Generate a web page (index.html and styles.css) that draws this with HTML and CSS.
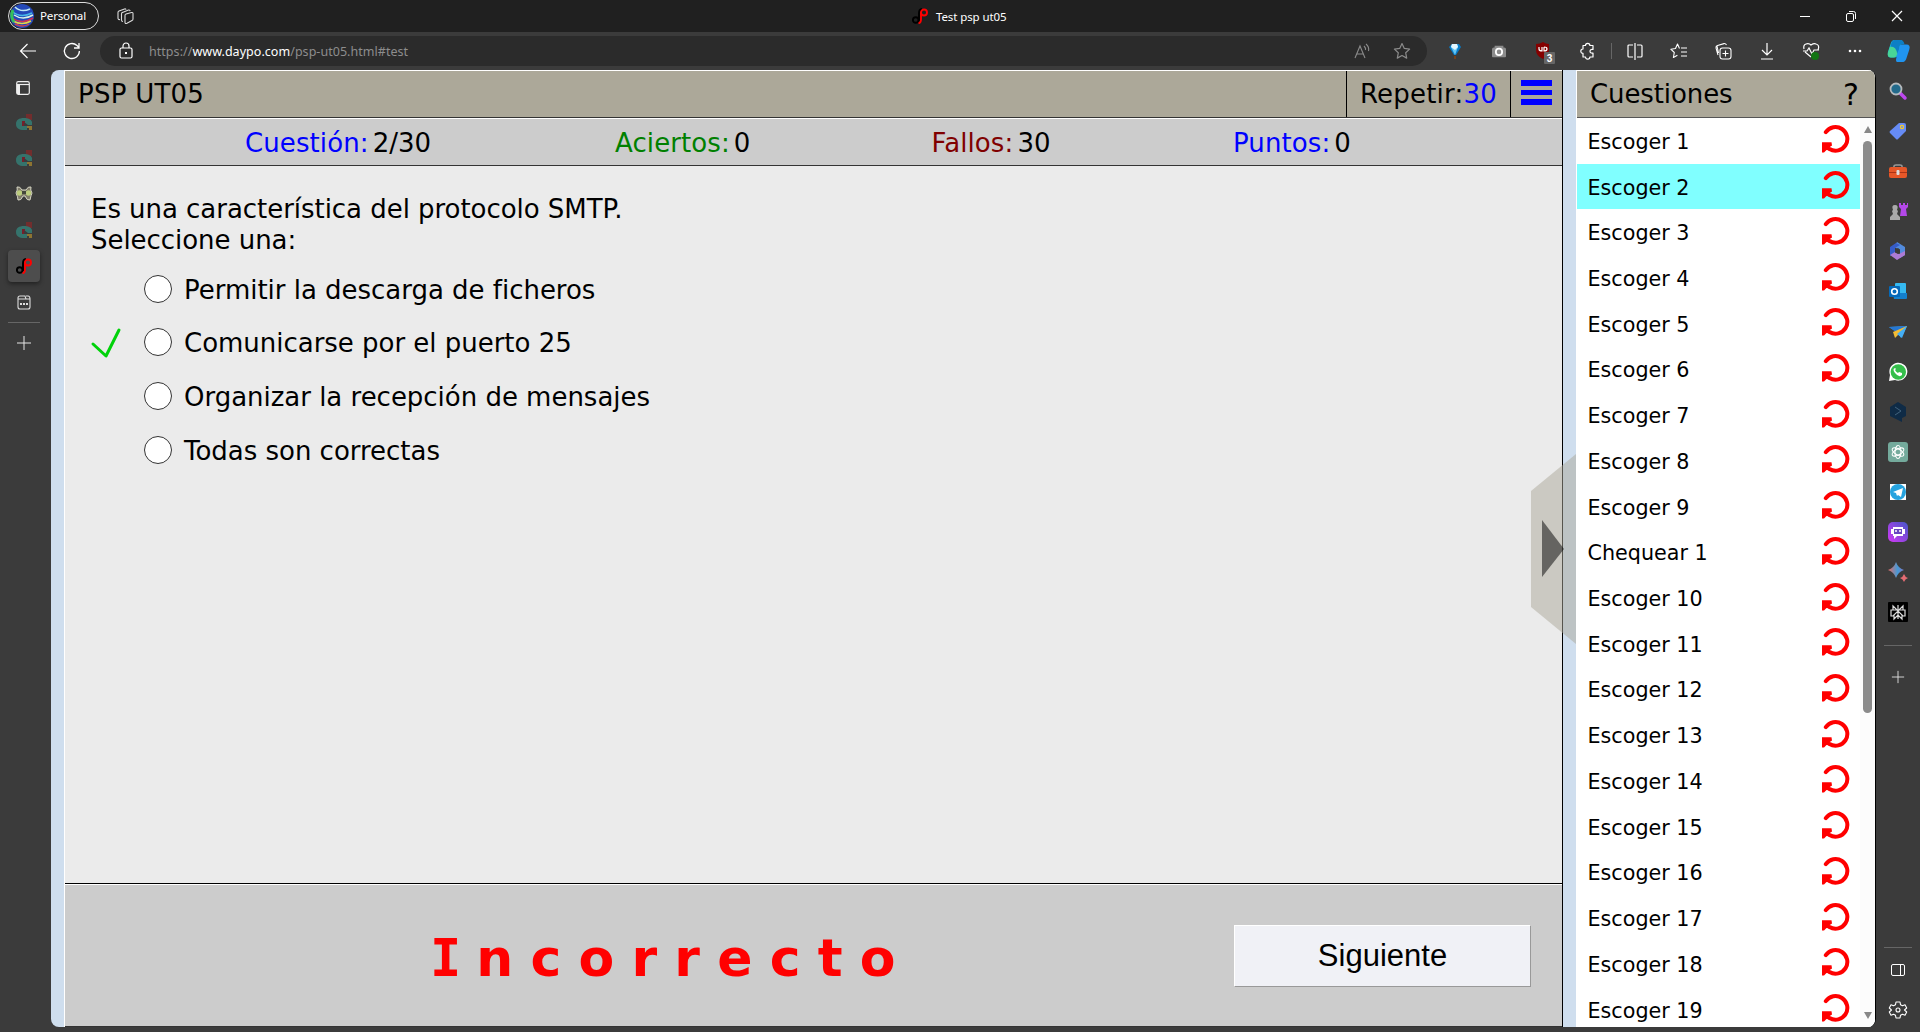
FILE: index.html
```html
<!DOCTYPE html>
<html lang="es">
<head>
<meta charset="utf-8">
<title>Test psp ut05</title>
<link rel="stylesheet" href="styles.css">
</head>
<body>
<svg class="defs" aria-hidden="true">
  <symbol id="redo" viewBox="0 0 28 28"><path d="M3.800 7.200A11.800 11.800 0 1 1 7.500 24" fill="none" stroke="#f00" stroke-width="4" stroke-linecap="round"/><path d="M0 17.300h9.500l.5 3.200-3 2 2 3-4.500-.5L2 27.500H0z" fill="#f00"/></symbol>
  <symbol id="moodle" viewBox="0 0 16 16"><path d="M10 0h6v6h-6z" fill="#722d2d"/><path d="M8 4C3 4 0 6 0 10s3 6 8 6h3v-4H8q-2 0-2-2t2-2l4 3h4V8c-1-3-4-4-8-4z" fill="#35736c"/><path d="M6 7h3v2H8v3H6z" fill="#74202b"/><path d="M11 12h5v4h-3v-2h-2z" fill="#8e7431"/></symbol>
  <symbol id="daypo" viewBox="0 0 16 16"><circle cx="3.700" cy="12" r="2.800" fill="none" stroke="#000" stroke-width="1.900"/><path d="M7 13V5q0-3.500 3-4" fill="none" stroke="#000" stroke-width="1.900"/><circle cx="12" cy="4.500" r="3" fill="none" stroke="#f00" stroke-width="1.900"/><path d="M9 4v7q0 4-2.500 4.300" fill="none" stroke="#f00" stroke-width="1.900"/></symbol>
  <symbol id="plus" viewBox="0 0 16 16"><path d="M8 1v14M1 8h14" stroke="#e6e6e6" fill="none"/></symbol>
</svg>

<header class="titlebar">
  <div class="profile">
    <svg width="24" height="24" viewBox="0 0 24 24"><circle cx="12" cy="12" r="12" fill="#2348b8"/><g fill="none" stroke-width="1.500"><path d="M5 3q6 6 15 2" stroke="#bde8f5"/><path d="M2 7q8 8 20 2" stroke="#47b8e8"/><path d="M4 11q9 6 19 0" stroke="#d8f4e8"/><path d="M2 14q10 7 21 0" stroke="#cf3154"/><path d="M3 17q9 5 18 0" stroke="#e3d547"/><path d="M5 20q8 4 14 0" stroke="#cc3f53"/><path d="M3 6q-3 6 1 12" stroke="#35c05a" stroke-width="3"/></g></svg>
    <span>Personal</span>
  </div>
  <svg class="workspaces" width="17" height="17" viewBox="0 0 17 17" fill="none" stroke="#ddd" stroke-width="1.100"><path d="M9 6 14.500 4.500q1.500-.3 1.500 1V11q0 1.200-1 1.600l-5 2.700q-2 .7-2-1V7.500Q8 6.300 9 6z"/><path d="M6 13.500q-1.500 0-1.500-1.500V6q0-1.300 1-1.600l6-2.400q1.300-.3 1.600 1.200"/><path d="M3 11.500Q1 12 1 10V4.500q0-1 1-1.400L7.500 1q1-.3 1.700.5"/></svg>
  <div class="tab-title"><svg width="16" height="16"><use href="#daypo"/></svg><span>Test psp ut05</span></div>
  <div class="window-buttons">
    <svg width="12" height="12" viewBox="0 0 12 12"><path d="M1 6.500h10" stroke="#fff"/></svg>
    <svg width="12" height="12" viewBox="0 0 12 12" fill="none" stroke="#fff"><rect x="1.500" y="3.500" width="7" height="8" rx="1.500"/><path d="M4 1.500h4.500q2 0 2 2V9"/></svg>
    <svg width="12" height="12" viewBox="0 0 12 12"><path d="m1 1 10 10M11 1 1 11" stroke="#fff" stroke-width="1.200"/></svg>
  </div>
</header>

<nav class="toolbar">
  <div class="nav-buttons">
    <svg width="18" height="16" viewBox="0 0 18 16" fill="none" stroke="#fff" stroke-width="1.200"><path d="M17 8H1.500M8.500 1 1.500 8l7 7"/></svg>
    <svg width="18" height="18" viewBox="0 0 18 18" fill="none" stroke="#fff" stroke-width="1.300"><path d="M16.400 9A7.500 7.500 0 1 1 14 3.500L16 5.500M16 1v5h-5"/></svg>
  </div>
  <div class="address">
    <svg width="14" height="18" viewBox="0 0 14 18" fill="none" stroke="#fff" stroke-width="1.200"><rect x="1" y="6" width="12" height="10" rx="1.500"/><path d="M4 6V4a3 3 0 0 1 6 0v2"/><rect x="6" y="10" width="2" height="2" fill="#fff" stroke="none"/></svg>
    <span class="url">https://<b>www.daypo.com</b>/psp-ut05.html#test</span>
    <svg class="read" width="18" height="18" viewBox="0 0 18 18" fill="none" stroke="#8b8b8b" stroke-width="1.100"><path d="m2 16 5-12 5 12M4 12h6M11 4q2 2 1.500 4M13 2q3.500 3 2.500 7"/></svg>
    <svg width="18" height="18" viewBox="0 0 18 18" fill="none" stroke="#8b8b8b" stroke-width="1.200" stroke-linejoin="round"><path d="m9 1.500 2.300 4.900 5.300.7-3.900 3.700 1 5.300L9 13.500l-4.700 2.600 1-5.300L1.400 7.100l5.300-.7z"/></svg>
  </div>
  <div class="tools">
    <svg width="16" height="18" viewBox="0 0 16 18"><path d="M5 2h7l2 3-5 8H7L2 5z" fill="#087bc7"/><path d="M5 2 4 5l4 8 3-8-1-3z" fill="#63c5f4"/><path d="M5 2h5l1 3-3 3-4-3z" fill="#e2f6ff"/><path d="M7 14h2v3H7z" fill="#754019"/></svg>
    <svg width="14" height="14" viewBox="0 0 16 16"><path d="M3 2h10v2h1q2 0 2 2v8q0 1-1 1H1q-1 0-1-1V6q0-2 2-2h1z" fill="#8c8c8c"/><circle cx="8" cy="9" r="3.600" fill="none" stroke="#fff" stroke-width="2"/></svg>
    <svg class="shield" width="20" height="24" viewBox="0 0 20 24"><path d="M8 1q3 2 6 2v6q0 6-6 9-7-3-7-9V3q4 0 7-2z" fill="#850000"/><path d="M4 6v2q0 2 3 2V6m2 0v4q3 0 3-2T9 6" fill="none" stroke="#fff" stroke-width="1.200"/><rect x="9" y="11" width="11" height="12" rx="1" fill="#666"/><text x="14.500" y="20.500" text-anchor="middle" font-size="10" font-weight="bold" fill="#fff">3</text></svg>
    <svg width="16" height="18" viewBox="0 0 16 18" fill="none" stroke="#fff" stroke-width="1.200" stroke-linejoin="round"><path d="M4 3.500h2.500a2.200 2.200 0 0 1 4.400 0H14v4q-3-.5-3 1.700t3 1.800v4h-3.100a2.200 2.200 0 0 1-4.400 0H4v-3.600a2.200 2.200 0 0 1 0-4.400z"/></svg>
    <i class="divider"></i>
    <svg width="16" height="18" viewBox="0 0 16 18" fill="none" stroke="#fff" stroke-width="1.200"><path d="M6 3H2q-1 0-1 1v10q0 1 1 1h4M10 3h4q1 0 1 1v10q0 1-1 1h-4M8 1v17"/></svg>
    <svg width="18" height="18" viewBox="0 0 18 18" fill="none" stroke="#fff" stroke-width="1.100" stroke-linejoin="round"><path d="M9.500 6.500 7.500 2l-2 4.500-4.700.7 3.500 3.300-.9 5 4-2.300M11 6h6M11 10h6M11 14h6"/></svg>
    <svg width="18" height="18" viewBox="0 0 18 18" fill="none" stroke="#fff" stroke-width="1.100"><rect x="6" y="6" width="11" height="11" rx="2.500"/><path d="M11.500 8.500v6M8.500 11.500h6M4 13l-2-7q-.3-2 1.500-2.500L10 1.600q1.500-.3 2.500 1.500M4.500 11 3 4"/></svg>
    <svg width="16" height="18" viewBox="0 0 16 18" fill="none" stroke="#fff" stroke-width="1.200"><path d="M8 1v12M3 8l5 5 5-5M2 17h12"/></svg>
    <svg width="18" height="20" viewBox="0 0 18 20" fill="none" stroke="#fff" stroke-width="1.200"><path d="M9 16 3 11M2 8Q1 4 4 3q3-1 5 1 3-2 5-1 4 1 2 6M1 10h4l2-3 3 6 2-4h5"/><circle cx="13" cy="15" r="4" fill="#137514" stroke="none"/></svg>
    <svg width="16" height="4" viewBox="0 0 16 4" fill="#fff"><circle cx="3" cy="2" r="1.300"/><circle cx="8" cy="2" r="1.300"/><circle cx="13" cy="2" r="1.300"/></svg>
    <svg class="copilot" width="24" height="26" viewBox="0 0 26 26"><path d="M8 1h7q2 0 1 3l-3 12q-1 4-5 4H4q-4 0-3-6l3-9q1-4 4-4z" fill="#16b5d8"/><path d="M3 9q5-3 9 0l-1 7q-1 4-4 4H4q-4 0-3-5z" fill="#48d597"/><path d="M16 6h5q5 0 3 6l-3 9q-1 4-5 4h-4q-3 0-2-4l3-12q1-3 3-3z" fill="#2094ef"/><path d="M8 1h7q3 0 4 5h-3q-3 0-3 5l-2 5q-1-8-7-8 1-7 4-7z" fill="#0d7fc5"/></svg>
  </div>
</nav>

<div class="workspace">
  <aside class="tabs">
    <div><svg width="14" height="14" viewBox="0 0 14 14" fill="none" stroke="#eee" stroke-width="1.200"><rect x=".7" y=".7" width="12.600" height="12.600" rx="1.500"/><path d="M1 3.500h12"/><path d="M2.500 3v10" stroke-width="3"/></svg></div>
    <div><svg width="16" height="16"><use href="#moodle"/></svg></div>
    <div><svg width="16" height="16"><use href="#moodle"/></svg></div>
    <div><svg width="16" height="16" viewBox="0 0 16 16"><path d="M1 1q3-1 5 3h4q2-4 5-3-1 3 1 6-1 2-2 7-3 1-5-4H7q-2 5-5 4 0-3-2-7 2-3 1-6z" fill="#807c6a" stroke="#d5d5c4"/><circle cx="3.500" cy="7" r="2.700" fill="#bccd7d"/><circle cx="12.500" cy="7" r="2.700" fill="#bccd7d"/><path d="M6 5h4v3H6z" fill="#44473b"/></svg></div>
    <div><svg width="16" height="16"><use href="#moodle"/></svg></div>
    <div class="active"><span><svg width="16" height="16"><use href="#daypo"/></svg></span></div>
    <div><svg width="14" height="15" viewBox="0 0 14 15" fill="none" stroke="#ddd" stroke-width="1.100"><path d="M3 1h5l1 3h4v8q0 2-2 2H3q-2 0-2-2V3q0-2 2-2zM9 1h2q2 0 2 3M1 4h8"/><path d="M3 9h2m1 0h2m1 0h2" stroke-width="2"/></svg></div>
    <hr>
    <div class="new-tab"><svg width="16" height="16"><use href="#plus"/></svg></div>
  </aside>

  <main class="page">
    <section class="quiz">
      <div class="quiz-head"><h1>PSP UT05</h1><div class="repeat">Repetir:<b>30</b></div><div class="menu"><i></i><i></i><i></i></div></div>
      <div class="stats">
        <span><b class="blue">Cuestión:</b>2/30</span><span><b class="green">Aciertos:</b>0</span><span><b class="maroon">Fallos:</b>30</span><span><b class="blue">Puntos:</b>0</span>
      </div>
      <div class="question">
        <p>Es una característica del protocolo SMTP.<br>Seleccione una:</p>
        <ul>
          <li><span class="mark"></span><i class="radio"></i><span>Permitir la descarga de ficheros</span></li>
          <li><span class="mark"><svg width="30" height="30" viewBox="0 0 30 30"><path d="M2 16 15 28 28 2" fill="none" stroke="#00d20a" stroke-width="3" stroke-linecap="round" stroke-linejoin="round"/></svg></span><i class="radio"></i><span>Comunicarse por el puerto 25</span></li>
          <li><span class="mark"></span><i class="radio"></i><span>Organizar la recepción de mensajes</span></li>
          <li><span class="mark"></span><i class="radio"></i><span>Todas son correctas</span></li>
        </ul>
      </div>
      <div class="result"><strong><span>I</span>ncorrecto</strong><button>Siguiente</button></div>
    </section>
    <section class="list-panel">
      <div class="list-head"><h2>Cuestiones</h2><span>?</span></div>
      <div class="list-body">
        <ol id="questions"></ol>
        <div class="scrollbar"><i class="up"></i><i class="thumb"></i><i class="down"></i></div>
      </div>
    </section>
    <svg class="handle" width="46" height="190" viewBox="0 0 46 190"><path d="M0 37 45 0v190L0 153z" fill="#aca899" fill-opacity=".5"/><path d="m11 66 22 29-22 28z" fill="#000" fill-opacity=".5"/></svg>
  </main>

  <aside class="apps">
    <div><svg width="18" height="18" viewBox="0 0 18 18"><path d="m11 11 5 5" stroke="#bd47ee" stroke-width="3.500" stroke-linecap="round"/><circle cx="7" cy="7" r="5.500" fill="#236a8b" stroke="#b5babd" stroke-width="1.800"/></svg></div>
    <div><svg width="18" height="18" viewBox="0 0 18 18"><path d="M10 1h5q2 0 2 2v6l-8 8q-1 1-2 0l-6-6q-1-1 0-2z" fill="#668bf5"/><circle cx="13" cy="5" r="1.600" fill="none" stroke="#f5cb29" stroke-width="1.200"/></svg></div>
    <div><svg width="18" height="16" viewBox="0 0 18 16"><path d="M5 5V3q0-1 2-1h4q2 0 2 1v2" fill="none" stroke="#999" stroke-width="1.600"/><rect y="4" width="18" height="11" rx="2" fill="#e65728"/><path d="M0 9h18v1H0z" fill="#aa3417"/><rect x="7.500" y="7" width="3" height="5" rx="1" fill="#ddd"/></svg></div>
    <div><svg width="19" height="19" viewBox="0 0 19 19"><path d="M10 1h2v2h2V1h2v2h2V1h1v4l-2 2 1 7h-7l1-7-2-2z" fill="#b348e8"/><path d="M1 18v-3l3-3-1-3 1-1q-2-5 2-5t2 5l1 1-1 3 3 3v3z" fill="#a9a9a9"/></svg></div>
    <div><svg width="18" height="18" viewBox="0 0 18 18"><path d="m8 0 8 5v8l-5 3V8L5 5z" fill="#528bdd"/><path d="M7 1 1 5v9l5-3V6l5-3z" fill="#365cc7"/><path d="m1 13 5-3 4 2 6-3v4l-8 5z" fill="#ad7bd4"/><path d="M6 7.500 9 6l2 1.500v3L9 12l-3-1.500z" fill="#3b3b3b"/></svg></div>
    <div><svg width="18" height="18" viewBox="0 0 18 18"><rect x="6" y="1" width="11" height="15" rx="1" fill="#35b9f1"/><path d="M4 11h14v5q0 1-1 1H5z" fill="#1480cd"/><rect y="4" width="11" height="11" rx="1" fill="#0569b9"/><circle cx="5.500" cy="9.500" r="2.800" fill="none" stroke="#fff" stroke-width="1.600"/></svg></div>
    <div><svg width="18" height="16" viewBox="0 0 18 16"><path d="m0 3 18-1-6 12-3-5z" fill="#37a9f4"/><path d="M0 3 18 2 7 8z" fill="#2677d2"/><path d="m4 8 14-6-12 12z" fill="#f2bc35"/><path d="m8 10 10-8-5 12z" fill="#44aef5"/></svg></div>
    <div><svg width="20" height="20" viewBox="0 0 20 20"><path d="m1 19 1-6a9 9 0 1 1 5 5z" fill="#fff"/><circle cx="10.300" cy="10" r="7.700" fill="#34be4b"/><path d="M7 6q-3 1 0 5 4 5 7 2v-2l-3-1-1 1q-2-1-3-3l1-1z" fill="#fff"/></svg></div>
    <div><svg width="16" height="20" viewBox="0 0 16 20"><path d="m8 0 8 5v9l-4 2v4l-6-3-6-3V5z" fill="#0f2b46"/><path d="m5 5 6 4-6 4" fill="none" stroke="#42637d"/></svg></div>
    <div><svg width="20" height="20" viewBox="0 0 20 20"><rect width="20" height="20" rx="3" fill="#74aa9c"/><g fill="none" stroke="#fff" stroke-width="1.100"><ellipse cx="10" cy="10" rx="3" ry="6.500"/><ellipse cx="10" cy="10" rx="3" ry="6.500" transform="rotate(60 10 10)"/><ellipse cx="10" cy="10" rx="3" ry="6.500" transform="rotate(120 10 10)"/></g></svg></div>
    <div><svg width="16" height="16" viewBox="0 0 16 16"><path d="M0 0h16v16H0z" fill="#fff"/><circle cx="8" cy="8" r="8" fill="#26a3df"/><path d="m3 8 10-4-2 9-3-2-1 1-1-3z" fill="#fff"/></svg></div>
    <div><svg width="20" height="20" viewBox="0 0 20 20"><defs><linearGradient id="poe" x1="1" x2="0" y2="1"><stop stop-color="#4457c8"/><stop offset="1" stop-color="#d338f5"/></linearGradient></defs><rect width="20" height="20" rx="5" fill="url(#poe)"/><path d="M5 5h10v2h2v5h-2v2H9l-3 3v-3H5v-2H3V7h2z" fill="#fff"/><path d="M6 7h8v5H6z" fill="#6947c1"/><path d="M8 8v2m4-2v2" stroke="#fff" stroke-width="1.500"/></svg></div>
    <div><svg width="20" height="20" viewBox="0 0 20 20"><defs><linearGradient id="spark"><stop stop-color="#e56c62"/><stop offset=".6" stop-color="#4699d6"/><stop offset="1" stop-color="#7c78c5"/></linearGradient></defs><path d="M8 0q2 6 8 8-6 2-8 8-2-6-8-8 6-2 8-8z" fill="url(#spark)"/><path d="M16 12q1 3 4 4-3 1-4 4-1-3-4-4 3-1 4-4z" fill="#e46c73"/></svg></div>
    <div><svg width="20" height="20" viewBox="0 0 20 20"><rect width="20" height="20" rx="1" fill="#000"/><path d="M10 3v14M5 4l5 5 5-5v4H5zM3 8h14v6h-2L10 9l-5 5H3zm3 5v4l4-4 4 4v-4" fill="none" stroke="#ddd" stroke-width="1.200"/></svg></div>
    <hr>
    <div class="add"><svg width="14" height="14"><use href="#plus"/></svg></div>
    <hr class="bottom-line">
    <div class="side"><svg width="14" height="12" viewBox="0 0 14 12" fill="none" stroke="#fff"><rect x=".5" y=".5" width="13" height="11" rx="1.500"/><path d="M9.500 1v10"/></svg></div>
    <div class="gear"><svg width="18" height="18" viewBox="0 0 18 18" fill="none" stroke="#fff" stroke-width="1.100" stroke-linejoin="round"><path d="m7 1 4 0 .5 2.700 2 1.100 2.500-1 1.700 3.200L15.500 9l2.200 2-1.700 3.200-2.500-1-2 1.100L11 17H7l-.5-2.700-2-1.100-2.500 1L.3 11l2.200-2L.3 7 2 3.800l2.500 1 2-1.100z"/><circle cx="9" cy="9" r="2"/></svg></div>
  </aside>
</div>
<script src="questions.js"></script>
</body>
</html>
```
FILE: questions.js
```js
const names = [];
for (let n = 1; n <= 19; n++) {
  if (n === 10) names.push("Chequear 1");
  names.push("Escoger " + n);
}
document.getElementById("questions").innerHTML = names
  .map((name) => `<li${name === "Escoger 2" ? ' class="selected"' : ""}><span>${name}</span><svg width="28" height="28"><use href="#redo"/></svg></li>`)
  .join("");
```
FILE: styles.css
```css
* { box-sizing: border-box; }
body { margin: 0; width: 1920px; height: 1032px; overflow: hidden; background: #3b3b3b; font-family: "DejaVu Sans", sans-serif; color: #000; }
svg { display: block; flex: none; overflow: visible; }
.defs { display: none; }
b { font-weight: normal; }
h1, h2, p, ul, ol { margin: 0; padding: 0; font-weight: normal; list-style: none; }

.titlebar { height: 32px; display: flex; align-items: center; background: #202020; color: #fff; font: 12px "Noto Sans", sans-serif; }
.profile { width: 91px; height: 28px; margin-left: 8px; border: 1px solid #ddd; border-radius: 14px; display: flex; align-items: center; gap: 6px; padding-left: 1px; }
.profile span { font-size: 11.6px; letter-spacing: -.2px; margin-top: -1px; }
.workspaces { margin-left: 18px; }
.tab-title { display: flex; align-items: center; gap: 8px; margin-left: 778px; font-size: 11.5px; width: 110px; white-space: nowrap; letter-spacing: -.1px; }
.window-buttons { margin-left: auto; margin-right: 17px; display: flex; gap: 34px; }

.toolbar { height: 38px; display: flex; align-items: center; }
.nav-buttons { width: 100px; display: flex; padding-left: 19px; gap: 26px; align-items: center; }
.address { width: 1327px; height: 30px; border-radius: 15px; background: #2b2b2b; display: flex; align-items: center; padding: 0 16px 0 19px; }
.url { margin-left: 16px; flex: 1; font: 12.5px "Noto Sans", sans-serif; letter-spacing: .04px; color: #8d8d8d; }
.url b { color: #fff; }
.read { margin-right: 22px; }
.tools { margin-left: 6px; display: grid; grid-template-columns: repeat(4, 44px) 4px repeat(6, 44px) 43px; align-items: center; justify-items: center; }
.shield { margin: 4px 0 0 4px; font-family: "Liberation Sans", sans-serif; }
.divider { width: 1px; height: 16px; background: #666; }

.workspace { display: flex; height: 962px; }
.tabs { width: 51px; }
.tabs div { width: 47px; height: 36px; display: flex; align-items: center; justify-content: center; }
.tabs div:first-child { height: 34px; padding-top: 2px; padding-right: 1px; }
.tabs .active span { width: 32px; height: 32px; margin-left: 1px; border-radius: 4px; background: #4d4d4d; display: grid; place-items: center; box-shadow: 0 2px 4px #222; }
.tabs hr { margin: 2px 0 0 8px; width: 32px; border: 0; height: 1px; background: #666; }
.tabs .new-tab { padding-top: 3px; }

.page { position: relative; width: 1825px; height: 957px; display: flex; background: #cfdeee; border-radius: 8px; overflow: hidden; padding-left: 13px; border-right: 1px solid #000; }
.quiz { width: 1499px; border-left: 1px solid #fff; border-right: 1px solid #000; display: flex; flex-direction: column; font-size: 26px; }
.quiz-head { height: 48px; border-top: 1px solid #fff; border-bottom: 1px solid #333; background: #aca899; display: flex; line-height: 47px; }
h1 { flex: 1; padding-left: 13px; font-size: 26px; letter-spacing: .25px; }
.repeat { width: 164px; border-left: 1px solid #000; padding-left: 13px; letter-spacing: .2px; }
.repeat b, .blue { color: #00f; }
.menu { width: 52px; border-left: 1px solid #000; padding: 9px 0 0 10px; display: flex; flex-direction: column; gap: 4px; }
.menu i { width: 31px; height: 5.700px; background: #00f; }
.stats { height: 48px; border-top: 1px solid #fff; border-bottom: 1px solid #333; background: #ccc; display: grid; grid-template-columns: 370px 316.500px 301.500px 1fr; padding-left: 180px; line-height: 48px; }
.stats b { margin-right: 4px; letter-spacing: .1px; }
.green { color: #008000; }
.maroon { color: #800000; }
.question { height: 717px; background: #ebebeb; padding: 28px 0 0 26px; letter-spacing: -.02px; }
.question p { line-height: 31px; letter-spacing: -.04px; }
.question ul { margin-top: 7px; }
.question li { height: 53.600px; display: flex; align-items: center; }
.mark { width: 53px; }
.radio { width: 28px; height: 28px; margin-right: 12px; margin-top: -2px; border: 1.500px solid #333; border-radius: 50%; background: #fff; }
.result { flex: 1; background: #ccc; border-top: 1px solid #000; border-bottom: 1px solid #333; box-shadow: inset 0 1px #fff; display: flex; align-items: center; }
.result strong { width: 803px; margin-left: 366px; padding-top: 5px; color: #f00; font-size: 52px; letter-spacing: 17.200px; white-space: nowrap; }
.result strong span { font-family: "DejaVu Sans Mono", monospace; letter-spacing: 15px; margin-left: -1px; }
.result button { width: 297px; height: 62px; margin-top: 2px; border: 1px solid; border-color: #fff #999 #999 #fff; background: #f0f1f6; color: #000; font: 31px "Liberation Sans", sans-serif; padding: 0; }

.list-panel { width: 299px; margin-left: 13px; border-left: 1px solid #fff; background: #fff; }
.list-head { height: 48px; border-top: 1px solid #fff; border-bottom: 1px solid #555; background: #aca899; display: flex; justify-content: space-between; padding: 0 16px 0 13px; font-size: 26px; line-height: 47px; }
.list-head span { font-size: 30px; }
h2 { font-size: 26px; letter-spacing: -.1px; }
.list-body { display: flex; height: 909px; overflow: hidden; }
#questions { width: 283px; }
#questions li { height: 45.720px; display: flex; align-items: center; justify-content: space-between; padding: 0 10px 0 10.500px; font-size: 20.700px; }
#questions span { padding-top: 2px; }
#questions svg { margin-top: -3px; }
#questions .selected { background: #80ffff; }
.scrollbar { width: 15px; display: flex; flex-direction: column; align-items: center; background: #fcfcfc; padding: 8px 0; }
.up, .down { border: 4.500px solid transparent; }
.up { border-top: 0; border-bottom: 7px solid #888; }
.down { border-bottom: 0; border-top: 7px solid #888; margin-top: auto; }
.thumb { width: 9px; height: 572px; margin-top: 8px; border-radius: 5px; background: #8b8b8b; }
.handle { position: absolute; left: 1480px; top: 384px; }

.apps { width: 44px; padding-top: 1px; display: flex; flex-direction: column; align-items: center; }
.apps div { height: 40.080px; display: flex; align-items: center; }
.apps hr { width: 28px; height: 1px; border: 0; margin: 13px 0 11px; background: #666; flex: none; }
.apps .bottom-line { margin: auto 0 2px; }
.apps .gear { margin-bottom: 2px; }
```
